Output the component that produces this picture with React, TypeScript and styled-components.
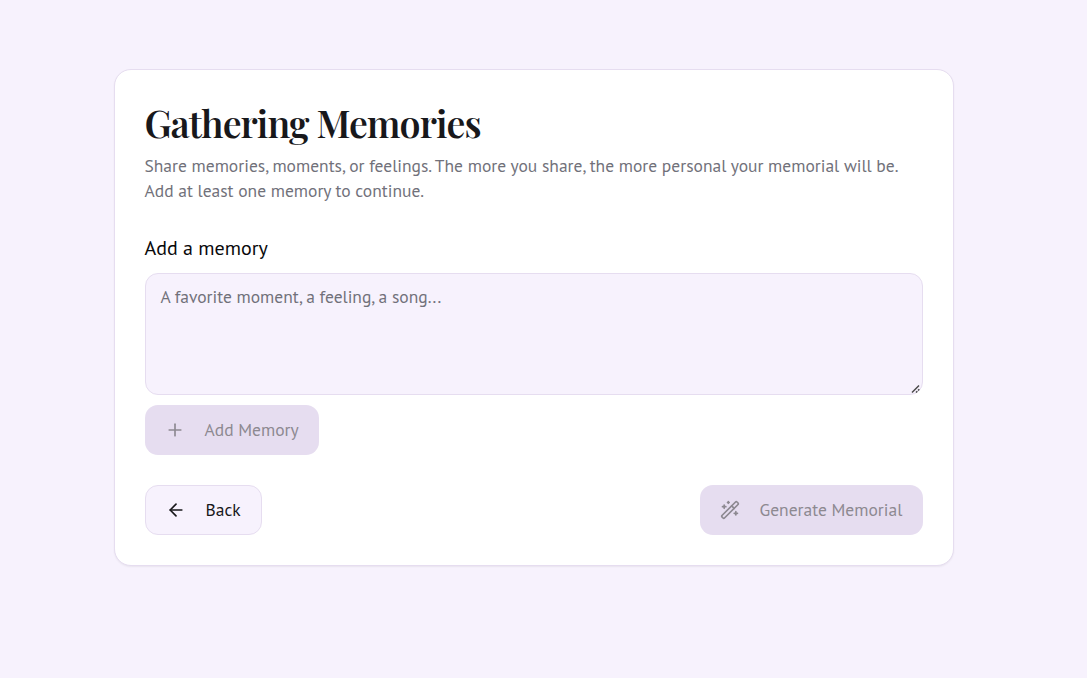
import React from "react";
import styled, { createGlobalStyle } from "styled-components";
import { ArrowLeft, Plus, WandSparkles } from "lucide-react";

const GlobalStyle = createGlobalStyle`
  *,
  *::before,
  *::after {
    box-sizing: border-box;
  }

  body {
    margin: 0;
    background: #f7f2fd;
    color: #18181b;
    font-family: "PT Sans", "Open Sans", "Noto Sans", sans-serif;
  }
`;

const Page = styled.main`
  display: flex;
  justify-content: center;
  min-height: 678px;
  padding: 69px 20px 0 0;
`;

const Card = styled.section`
  align-self: flex-start;
  width: 840px;
  padding: 30px;
  background: #fff;
  border: 1px solid #e6ddf0;
  border-radius: 17px;
  box-shadow: 0 1px 2px rgba(0, 0, 0, 0.06);
`;

const Title = styled.h1`
  margin: 0 0 9px;
  font-family: "Playfair Display", "Liberation Serif", serif;
  font-size: 37.5px;
  font-weight: 600;
  line-height: 44px;
  letter-spacing: -0.025em;
  white-space: nowrap;
`;

const Description = styled.p`
  margin: 0;
  color: #71717a;
  font-size: 17.5px;
  line-height: 25px;
`;

const Form = styled.form`
  display: flex;
  flex-direction: column;
  align-items: flex-start;
  margin-top: 30px;
`;

const Label = styled.label`
  margin-bottom: 10px;
  color: #09090b;
  font-size: 20px;
  line-height: 30px;
`;

const InputWrap = styled.div`
  position: relative;
  width: 100%;
  margin-bottom: 10px;
`;

const MemoryInput = styled.textarea`
  display: block;
  width: 100%;
  height: 122px;
  margin: 0;
  padding: 10px 15px;
  background: #f7f2fd;
  border: 1px solid #e6ddf0;
  border-radius: 13px;
  font: inherit;
  font-size: 17.5px;
  line-height: 25px;
  outline: none;
  resize: vertical;

  &::placeholder {
    color: #71717a;
    opacity: 1;
  }

  &::-webkit-resizer {
    background: transparent;
  }
`;

const ResizeGrip = styled.svg`
  position: absolute;
  right: 1.5px;
  bottom: 1px;
  pointer-events: none;
`;

const Button = styled.button<{ $outline?: boolean; $width: number }>`
  display: inline-flex;
  align-items: center;
  gap: 20px;
  width: ${({ $width }) => $width}px;
  height: 50px;
  padding: 0 20px;
  background: ${({ $outline }) => ($outline ? "#f7f2fd" : "#e6ddf0")};
  border: ${({ $outline }) => ($outline ? "1px solid #e6ddf0" : "0")};
  border-radius: 13px;
  color: ${({ $outline }) => ($outline ? "#18181b" : "#8d8991")};
  font: inherit;
  font-size: 17.5px;
  line-height: 24px;
  white-space: nowrap;

  svg {
    flex-shrink: 0;
  }
`;

const Actions = styled.div`
  display: flex;
  justify-content: space-between;
  margin-top: 30px;
`;

export default function App() {
  return (
    <>
      <GlobalStyle />
      <Page>
        <Card>
          <Title>Gathering Memories</Title>
          <Description>
            Share memories, moments, or feelings. The more you share, the more
            personal your memorial will be. Add at least one memory to continue.
          </Description>
          <Form>
            <Label htmlFor="memory">Add a memory</Label>
            <InputWrap>
              <MemoryInput
                id="memory"
                placeholder="A favorite moment, a feeling, a song..."
              />
              <ResizeGrip width="10" height="10" viewBox="0 0 10 10">
                <path
                  d="M1 8.5 8 1.5M5 8.5 6.3 7.2M7 6.5 8.3 5.2"
                  stroke="#4a4a4a"
                  strokeWidth="1.5"
                  fill="none"
                />
              </ResizeGrip>
            </InputWrap>
            <Button type="button" disabled $width={174}>
              <Plus size={20} />
              Add Memory
            </Button>
          </Form>
          <Actions>
            <Button type="button" $outline $width={117}>
              <ArrowLeft size={20} />
              Back
            </Button>
            <Button type="button" disabled $width={223}>
              <WandSparkles size={20} />
              Generate Memorial
            </Button>
          </Actions>
        </Card>
      </Page>
    </>
  );
}
